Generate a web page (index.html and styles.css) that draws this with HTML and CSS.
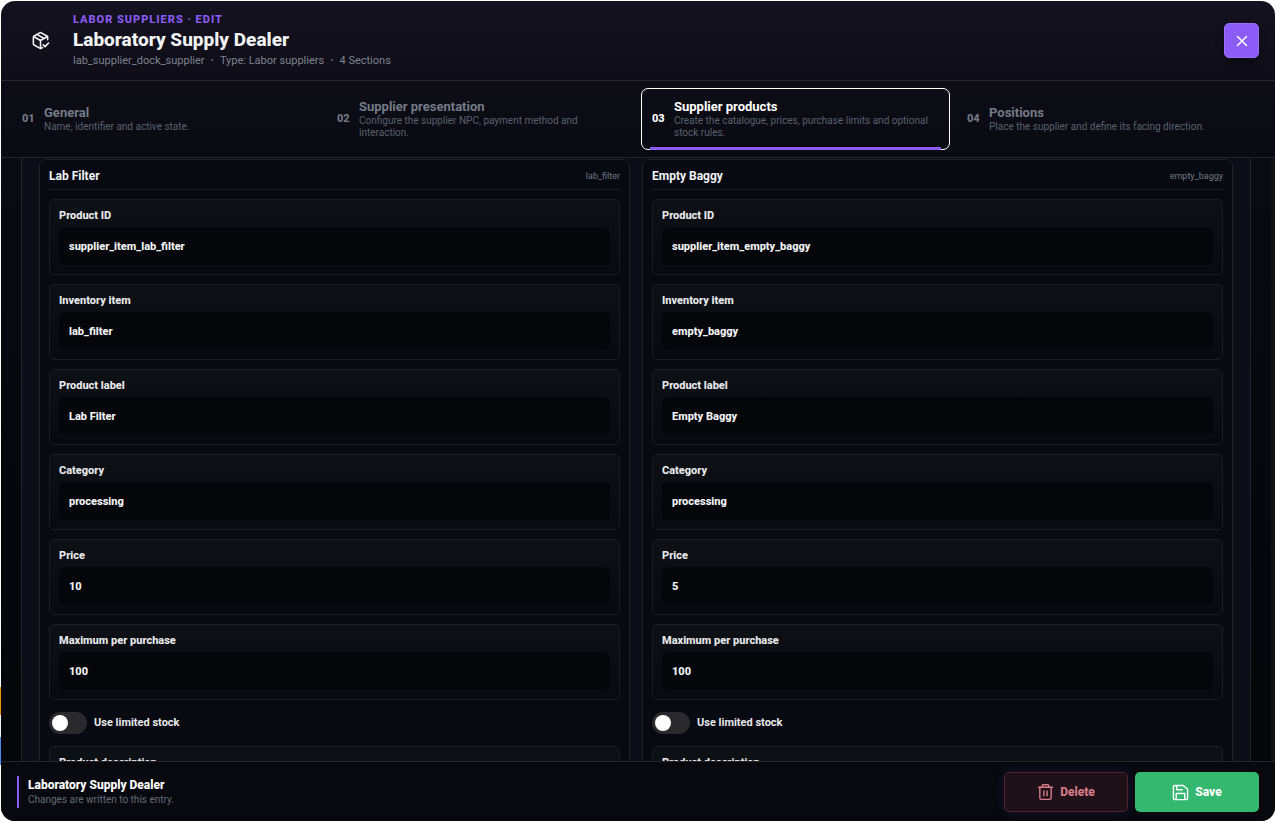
FILE: index.html
```html
<!DOCTYPE html>
<html lang="en">
<head>
    <meta charset="utf-8">
    <title>Laboratory Supply Dealer</title>
    <link rel="stylesheet" href="styles.css">
</head>
<body>

<div class="editor">
    <header class="editor-header">
        <div class="header-icon">
            <svg width="19" height="19" viewBox="0 0 24 24" fill="none" stroke="currentColor" stroke-width="2" stroke-linecap="round" stroke-linejoin="round">
                <path d="M21 11V8a2 2 0 0 0-1-1.700l-7-4a2 2 0 0 0-2 0l-7 4A2 2 0 0 0 3 8v8a2 2 0 0 0 1 1.700l7 4a2 2 0 0 0 2 0l1.500-.8"/>
                <path d="M3.300 7 12 12l8.700-5M12 22V12M7.500 4.300l9 5.100"/>
                <path d="m15.500 17.500 2.200 2.200 4.500-4.500"/>
            </svg>
        </div>
        <div class="header-text">
            <p class="kicker">LABOR SUPPLIERS · EDIT</p>
            <h1>Laboratory Supply Dealer</h1>
            <p class="meta"><span>lab_supplier_dock_supplier</span><b>·</b><span>Type: Labor suppliers</span><b>·</b><span>4 Sections</span></p>
        </div>
        <button type="button" class="close-button" aria-label="Close">
            <svg width="12" height="12" viewBox="0 0 12 12" fill="none" stroke="currentColor" stroke-width="1.500" stroke-linecap="round"><path d="M1.500 1.500l9 9M10.500 1.500l-9 9"/></svg>
        </button>
    </header>

    <nav class="tabs">
        <button type="button" class="tab">
            <span class="tab-number">01</span>
            <span class="tab-text"><span class="tab-title">General</span><span class="tab-desc">Name, identifier and active state.</span></span>
        </button>
        <button type="button" class="tab">
            <span class="tab-number">02</span>
            <span class="tab-text"><span class="tab-title">Supplier presentation</span><span class="tab-desc">Configure the supplier NPC, payment method and interaction.</span></span>
        </button>
        <button type="button" class="tab active">
            <span class="tab-number">03</span>
            <span class="tab-text"><span class="tab-title">Supplier products</span><span class="tab-desc">Create the catalogue, prices, purchase limits and optional stock rules.</span></span>
        </button>
        <button type="button" class="tab">
            <span class="tab-number">04</span>
            <span class="tab-text"><span class="tab-title">Positions</span><span class="tab-desc">Place the supplier and define its facing direction.</span></span>
        </button>
    </nav>

    <main class="content">
        <form class="products" id="productsForm">
            <section class="product">
                <div class="product-header"><h2>Lab Filter</h2><span>lab_filter</span></div>
                <div class="field"><label for="id1">Product ID</label><input type="text" id="id1" value="supplier_item_lab_filter"></div>
                <div class="field"><label for="item1">Inventory item</label><input type="text" id="item1" value="lab_filter"></div>
                <div class="field"><label for="label1">Product label</label><input type="text" id="label1" value="Lab Filter"></div>
                <div class="field"><label for="category1">Category</label><input type="text" id="category1" value="processing"></div>
                <div class="field"><label for="price1">Price</label><input type="number" id="price1" value="10"></div>
                <div class="field"><label for="max1">Maximum per purchase</label><input type="number" id="max1" value="100"></div>
                <div class="toggle"><input type="checkbox" id="stock1"><label for="stock1">Use limited stock</label></div>
                <div class="field"><label for="desc1">Product description</label><textarea id="desc1"></textarea></div>
            </section>

            <section class="product">
                <div class="product-header"><h2>Empty Baggy</h2><span>empty_baggy</span></div>
                <div class="field"><label for="id2">Product ID</label><input type="text" id="id2" value="supplier_item_empty_baggy"></div>
                <div class="field"><label for="item2">Inventory item</label><input type="text" id="item2" value="empty_baggy"></div>
                <div class="field"><label for="label2">Product label</label><input type="text" id="label2" value="Empty Baggy"></div>
                <div class="field"><label for="category2">Category</label><input type="text" id="category2" value="processing"></div>
                <div class="field"><label for="price2">Price</label><input type="number" id="price2" value="5"></div>
                <div class="field"><label for="max2">Maximum per purchase</label><input type="number" id="max2" value="100"></div>
                <div class="toggle"><input type="checkbox" id="stock2"><label for="stock2">Use limited stock</label></div>
                <div class="field"><label for="desc2">Product description</label><textarea id="desc2"></textarea></div>
            </section>
        </form>
    </main>

    <footer class="editor-footer">
        <div class="entry">
            <strong>Laboratory Supply Dealer</strong>
            <span>Changes are written to this entry.</span>
        </div>
        <button type="button" class="action delete">
            <svg width="17" height="18" viewBox="0 0 18 18" fill="none" stroke="currentColor" stroke-width="1.500" stroke-linejoin="round">
                <path d="M1 4h16M5.500 4V2.500Q5.500 1.300 6.700 1.300h4.600Q12.500 1.300 12.500 2.500V4M3 4v11.200Q3 16.800 4.600 16.800h8.800Q15 16.800 15 15.200V4M7.300 7.500v6M10.700 7.500v6"/>
            </svg>
            Delete
        </button>
        <button type="submit" form="productsForm" class="action save">
            <svg width="17" height="17" viewBox="0 0 18 18" fill="none" stroke="currentColor" stroke-width="1.500" stroke-linejoin="round">
                <path d="M3 1.500h9l4.500 4V15a1.500 1.500 0 0 1-1.500 1.500H3A1.500 1.500 0 0 1 1.500 15V3A1.500 1.500 0 0 1 3 1.500zM5 1.500V6h6.500M4.500 16.500V10h9v6.500"/>
            </svg>
            Save
        </button>
    </footer>
</div>

</body>
</html>
```

FILE: styles.css
```css
* {
    box-sizing: border-box;
}

body {
    margin: 0;
    height: 100vh;
    padding: 1px;
    /* coloured slivers showing at the left edge of the window */
    background: linear-gradient(#fff 687px, #e88a0c 687px, #e88a0c 715px, #f1f4f6 715px, #f1f4f6 737px, #4a8be8 737px, #4a8be8 765px, #fff 765px);
    background-size: 1px 100%;
    background-repeat: no-repeat;
    font-family: Roboto, "Liberation Sans", sans-serif;
    color: #f2f3f6;
}

h1, h2, p {
    margin: 0;
}

button, input, textarea {
    font-family: inherit;
}

.editor {
    height: 100%;
    display: flex;
    flex-direction: column;
    overflow: hidden;
    border-radius: 14px;
    background: linear-gradient(#15121f, #0e0d17 80px, #090a12 158px, #040508 100%);
}

/* Header */
.editor-header {
    display: flex;
    align-items: center;
    gap: 10px;
    height: 80px;
    padding: 0 16px;
    border-bottom: 1px solid #292831;
}

.header-icon {
    width: 46px;
    display: flex;
    justify-content: center;
}

.header-text {
    flex: 1;
}

.kicker {
    font-size: 11px;
    line-height: 14px;
    font-weight: 800;
    letter-spacing: 1px;
    color: #8b5cf6;
}

h1 {
    font-size: 19px;
    line-height: 26px;
    font-weight: 800;
}

.meta {
    display: flex;
    gap: 6px;
    font-size: 11px;
    line-height: 15px;
    color: #7d838e;
}

.close-button {
    width: 35px;
    height: 35px;
    display: flex;
    align-items: center;
    justify-content: center;
    padding: 0;
    border: 1px solid #9a6dfa;
    border-radius: 5px;
    background: #8b5cf6;
    color: #fff;
    box-shadow: 0 4px 10px rgba(0, 0, 0, 0.3);
}

/* Section tabs */
.tabs {
    display: grid;
    grid-template-columns: repeat(4, 1fr);
    gap: 6px;
    padding: 7px 10px;
    border-bottom: 1px solid #24242c;
}

.tab {
    position: relative;
    display: flex;
    align-items: center;
    gap: 10px;
    height: 62px;
    padding: 0 10px 1px;
    border: 1px solid transparent;
    border-radius: 7px;
    background: none;
    color: #737b87;
    text-align: left;
}

.tab-number {
    width: 12px;
    font-size: 11px;
    font-weight: 800;
}

.tab-text {
    flex: 1;
}

.tab-title, .tab-desc {
    display: block;
}

.tab-title {
    font-size: 13px;
    line-height: 16px;
    font-weight: 700;
}

.tab-desc {
    font-size: 10px;
    line-height: 12px;
    color: #59616d;
}

.tab.active {
    border-color: #fff;
    color: #fff;
}

.tab.active::after {
    content: "";
    position: absolute;
    left: 8px;
    right: 8px;
    bottom: -1px;
    height: 3px;
    background: #8b5cf6;
}

/* Product cards */
.content {
    flex: 1;
    min-height: 0;
    overflow: hidden;
    padding: 0 20px;
    border-right: 4px solid #121216;
}

.products {
    display: grid;
    grid-template-columns: 1fr 1fr;
    gap: 12px;
    padding: 1px 17px;
    border: solid #24262c;
    border-width: 0 1px;
    background: #0b0e16;
}

.product {
    display: flex;
    flex-direction: column;
    gap: 9px;
    padding: 9px;
    border: 1px solid #1f2227;
    border-radius: 7px;
    background: #070a11;
}

.product-header {
    display: flex;
    justify-content: space-between;
    align-items: center;
    padding-bottom: 6px;
    border-bottom: 1px solid #1b1e24;
    font-size: 9px;
    line-height: 14px;
    color: #737985;
}

h2 {
    font-size: 12px;
    line-height: 14px;
    font-weight: 700;
    color: #f2f3f6;
}

.field {
    display: flex;
    flex-direction: column;
    gap: 4px;
    padding: 9px;
    border: 1px solid #1a1d22;
    border-radius: 5px;
    background: linear-gradient(#0d1014, #070a0e);
}

.field label, .toggle label {
    font-size: 11px;
    line-height: 14px;
    font-weight: 800;
    color: #e8e9ed;
}

.toggle label {
    font-weight: 700;
}

.field input, .field textarea {
    width: 100%;
    height: 38px;
    padding: 0 10px;
    border: 0;
    border-radius: 6px;
    background: #050609;
    color: #f2f3f6;
    font-size: 11px;
    font-weight: 800;
    appearance: textfield;
}

.field textarea {
    height: 70px;
    padding: 10px;
    resize: none;
}

.toggle {
    display: flex;
    align-items: center;
    gap: 7px;
    padding: 3px 0;
}

.toggle input {
    appearance: none;
    width: 38px;
    height: 22px;
    margin: 0;
    padding: 3px;
    border-radius: 11px;
    background: #29292e;
}

.toggle input::before {
    content: "";
    display: block;
    width: 16px;
    height: 16px;
    border-radius: 50%;
    background: #fff;
}

.toggle input:checked {
    background: #8b5cf6;
}

.toggle input:checked::before {
    margin-left: 16px;
}

/* Footer */
.editor-footer {
    display: flex;
    align-items: center;
    gap: 7px;
    padding: 10px 16px 9px;
    border-top: 1px solid #25262c;
    background: #08090f;
}

.entry {
    display: flex;
    flex-direction: column;
    justify-content: center;
    height: 32px;
    margin-right: auto;
    padding-left: 9px;
    border-left: 2px solid #8b5cf6;
    font-size: 10px;
    line-height: 14px;
    color: #646b77;
}

.entry strong {
    font-size: 12px;
    line-height: 16px;
    font-weight: 800;
    color: #fff;
}

.action {
    display: flex;
    align-items: center;
    justify-content: center;
    gap: 6px;
    width: 124px;
    height: 40px;
    border: 1px solid transparent;
    border-radius: 5px;
    font-size: 12px;
    font-weight: 800;
}

.delete {
    border-color: #54242d;
    background: #1f1119;
    color: #d77c87;
    box-shadow: 0 0 12px rgba(91, 60, 180, 0.2);
}

.save {
    background: #34b870;
    color: #fff;
}
```
